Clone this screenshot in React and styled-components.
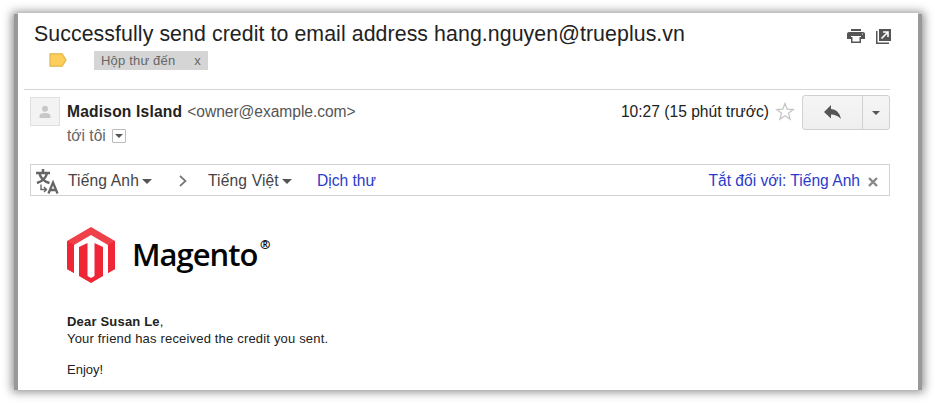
import React from "react";
import styled, { createGlobalStyle } from "styled-components";

const GlobalStyle = createGlobalStyle`
  * { box-sizing: border-box; }
  body { margin: 0; background: #fff; overflow: hidden; font-family: "Liberation Sans", Arial, sans-serif; }
`;

const Page = styled.main`
  width: 936px;
  height: 403px;
  padding: 13px 18px;
`;
const Panel = styled.article`
  position: relative;
  width: 900px;
  height: 377px;
  background: #fff;
  isolation: isolate;
  &::before {
    content: "";
    position: absolute;
    z-index: -2;
    inset: 1px -4px 0;
    background: #999;
    box-shadow: 0 0 9px 2px #8c8c8c;
  }
  &::after {
    content: "";
    position: absolute;
    z-index: -1;
    inset: 0;
    background: #fff;
  }
`;
const Subject = styled.header`
  display: flex;
  justify-content: space-between;
  height: 38px;
  padding: 8px 26px 0 16px;
`;
const Title = styled.h1`
  margin: 0;
  font-size: 21.3px;
  line-height: 26px;
  font-weight: 400;
  letter-spacing: 0.085px;
  color: #222;
  white-space: nowrap;
`;
const Tools = styled.div`
  display: flex;
  gap: 11px;
  padding-top: 7px;
`;
const Labels = styled.div`
  display: flex;
  height: 38px;
  padding-left: 31px;
`;
const Marker = styled.svg`
  display: block;
  margin: 2px 27px 0 0;
`;
const Chip = styled.span`
  display: flex;
  justify-content: space-between;
  width: 114px;
  height: 19px;
  padding: 0 7px;
  background: #d5d5d5;
  color: #666;
  font-size: 13px;
  line-height: 19px;
  letter-spacing: 0.18px;
  white-space: nowrap;
`;
const Sender = styled.section`
  display: flex;
  height: 75px;
  margin: 0 28px 0 6px;
  padding: 6px 0 0 6px;
  border-top: 1px solid #d5d5d5;
`;
const Avatar = styled.div`
  width: 30px;
  height: 29px;
  margin-top: 1px;
  border: 1px solid #dfdfdf;
  background: #f3f3f3;
  svg { display: block; }
`;
const People = styled.div`
  flex: 1;
  padding: 6px 0 0 7px;
  color: #555;
  font-size: 15.6px;
  line-height: 20px;
  white-space: nowrap;
`;
const Name = styled.strong`
  color: #222;
  letter-spacing: 0.19px;
`;
const Address = styled.span`
  margin-left: 5px;
  letter-spacing: -0.05px;
`;
const Recipient = styled.div`
  display: flex;
  align-items: center;
  gap: 6px;
  height: 20px;
  margin-top: 4px;
  color: #666;
`;
const Details = styled.span`
  display: grid;
  place-items: center;
  width: 14px;
  height: 14px;
  border: 1px solid #bbb;
  border-radius: 1px;
`;
const Caret = styled.i`
  width: 0;
  height: 0;
  border: ${(p) => p.$size || 4}px solid transparent;
  border-top-color: #555;
  border-bottom: 0;
`;
const Meta = styled.div`
  display: flex;
  color: #222;
  font-size: 15.6px;
  line-height: 32px;
  white-space: nowrap;
`;
const Star = styled.svg`
  margin: 6px 7px 0 6px;
`;
const Buttons = styled.div`
  display: flex;
  width: 88px;
  height: 35px;
  margin-top: -1px;
  border: 1px solid #d0d0d0;
  border-radius: 3px;
  background: linear-gradient(#f5f5f5, #efefef);
`;
const Action = styled.span`
  display: grid;
  place-items: center;
  width: ${(p) => p.$width}px;
  & + & { border-left: 1px solid #d0d0d0; }
`;
const Translate = styled.section`
  display: flex;
  align-items: center;
  width: 860px;
  height: 32px;
  margin-left: 12px;
  padding: 2px 11px 0 5px;
  border: 1px solid #d2d2d2;
  color: #444;
  font-size: 15.6px;
  line-height: 20px;
  white-space: nowrap;
`;
const Language = styled.span`
  display: flex;
  align-items: center;
  gap: 3px;
  width: ${(p) => p.$width}px;
  padding-left: ${(p) => p.$inset || 0}px;
  letter-spacing: 0.15px;
`;
const Chevron = styled.svg`
  margin-right: 21px;
`;
const Link = styled.span`
  color: #2a3cc9;
  margin-left: ${(p) => (p.$end ? "auto" : 0)};
`;
const Close = styled.svg`
  margin: 2px 0 0 8px;
`;
const Brand = styled.div`
  display: flex;
  height: 57px;
  margin: 31px 0 0 49px;
  color: #050505;
`;
const Wordmark = styled.span`
  width: 127px;
  margin: 4px 0 0 17px;
  font: 600 31px/46px "Open Sans", sans-serif;
  letter-spacing: -1px;
`;
const Registered = styled.span`
  margin: 8px 0 0 1px;
  font: 700 12.5px/20px "Open Sans", sans-serif;
`;
const Body = styled.div`
  padding: 29px 0 0 49px;
  font-size: 13px;
  line-height: 17px;
  color: #222;
`;
const Paragraph = styled.p`
  margin: 0 0 14px;
  letter-spacing: ${(p) => p.$tracking || 0}px;
`;

export default function App() {
  return (
    <Page>
      <GlobalStyle />
      <Panel>
        <Subject>
          <Title>Successfully send credit to email address hang.nguyen@trueplus.vn</Title>
          <Tools>
            <svg width="18" height="16" viewBox="0 0 18 16">
              <path fill="#555" d="M4 1h10v2H4zM2 4h14q2 0 2 2v5h-4V8H4v3H0V6q0-2 2-2zM4 9h10v6H4z" />
              <path fill="#fff" d="M5.5 9h7v4.5h-7zM15 5.5h1v1h-1z" />
            </svg>
            <svg width="16" height="16" viewBox="0 0 16 16">
              <path fill="#555" d="M3 1h12v12H3zM0 3h1.5v11.5H13V16H0z" />
              <path fill="none" stroke="#fff" strokeWidth="1.6" d="M5.5 10.5L11.5 4.5M7 4h5v5" />
            </svg>
          </Tools>
        </Subject>
        <Labels>
          <Marker width="18" height="14" viewBox="0 0 18 14">
            <path d="M1 .8h12.2L17 7l-3.8 6.2H1z" fill="#fccf5b" stroke="#e3b44d" strokeWidth="1.2" />
          </Marker>
          <Chip><span>Hộp thư đến</span><span>x</span></Chip>
        </Labels>
        <Sender>
          <Avatar>
            <svg width="28" height="27" viewBox="0 0 28 27">
              <circle cx="14" cy="10.8" r="3" fill="#c7c7c7" />
              <path d="M8.5 20v-2q0-3 5.5-3t5.5 3v2z" fill="#c7c7c7" />
            </svg>
          </Avatar>
          <People>
            <Name>Madison Island</Name><Address>&lt;owner@example.com&gt;</Address>
            <Recipient>tới tôi <Details><Caret /></Details></Recipient>
          </People>
          <Meta>
            <span>10:27 (15 phút trước)</span>
            <Star width="20" height="19" viewBox="0 0 20 19">
              <path d="M10 1.5l2.2 5.7 6 .3-4.7 3.8 1.6 5.9-5.1-3.4-5.1 3.4 1.6-5.9-4.7-3.8 6-.3z" fill="#fff" stroke="#c5c5c5" strokeWidth="1.3" />
            </Star>
            <Buttons>
              <Action $width={60}>
                <svg width="18" height="15" viewBox="0 0 18 15">
                  <path d="M7 0v4q8 .5 10 10-4-4.5-10-4.5v4L0 7z" fill="#555" />
                </svg>
              </Action>
              <Action $width={27}><Caret /></Action>
            </Buttons>
          </Meta>
        </Sender>
        <Translate>
          <svg width="26" height="27" viewBox="0 0 26 27" fill="none" stroke="#666">
            <path strokeWidth="2.5" d="M0 5h14M7 1v4M3.5 5.5q1.5 7 10 9.5M11 5.5Q9 12.5 1 15" />
            <path strokeWidth="1.4" d="M5 16.5v5h5M8 19l2.5 2.5L8 24" />
            <path strokeWidth="2.3" d="M12.5 25.5L17 14.5 21.5 25.5M14 22h6" />
          </svg>
          <Language $width={117} $inset={6}>Tiếng Anh<Caret $size={5} /></Language>
          <Chevron width="8" height="12" viewBox="0 0 8 12"><path d="M1 1l5.5 5L1 11" fill="none" stroke="#777" strokeWidth="1.7" /></Chevron>
          <Language $width={109}>Tiếng Việt<Caret $size={5} /></Language>
          <Link>Dịch thư</Link>
          <Link $end>Tắt đối với: Tiếng Anh</Link>
          <Close width="10" height="10" viewBox="0 0 10 10"><path d="M1 1l8 8M9 1L1 9" stroke="#888" strokeWidth="2.4" /></Close>
        </Translate>
        <Brand>
          <svg width="48" height="57" viewBox="0 0 48 57">
            <path fill="#f04049" d="M24 0l24 14v28l-7 4V18L24 8 7 18v28l-7-4V14z" />
            <path fill="#ee2636" d="M0 14l7 4v28l-7-4zM41 18l7-4v28l-7 4zM12 20l8.5-4v33l3.5 2 3.5-2V16l8.5 4v29l-12 7-12-7z" />
          </svg>
          <Wordmark>Magento</Wordmark><Registered>®</Registered>
        </Brand>
        <Body>
          <Paragraph $tracking={0.18}><Name>Dear Susan Le</Name>,<br />Your friend has received the credit you sent.</Paragraph>
          <Paragraph>Enjoy!</Paragraph>
        </Body>
      </Panel>
    </Page>
  );
}
